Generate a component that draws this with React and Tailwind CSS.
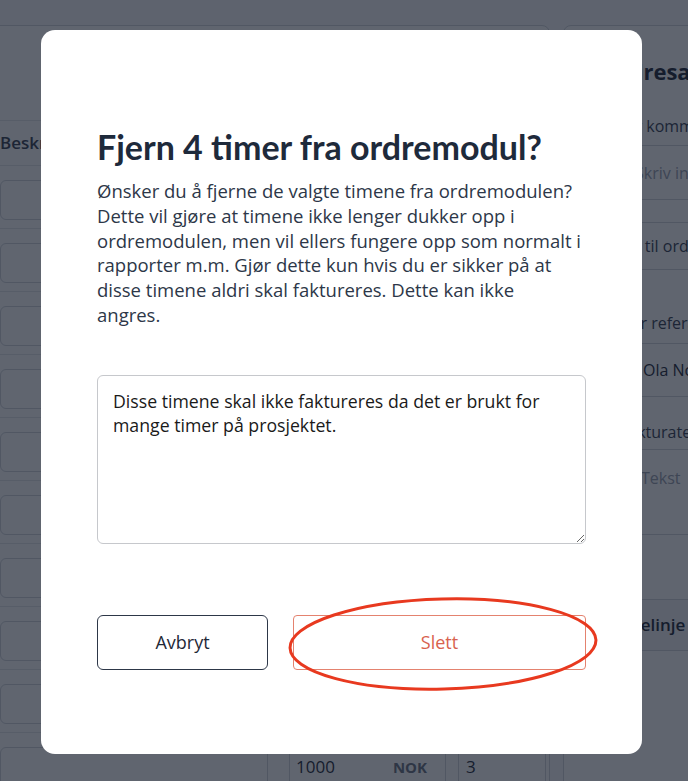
import React from "react";

function Row() {
  return (
    <div className="flex h-[63px] items-start border-b border-gray-200 pt-[14px]">
      <div className="h-[40px] w-[268px] shrink-0 rounded-md border border-gray-300 bg-white" />
      <div className="ml-[21px] flex h-[40px] w-[157px] shrink-0 items-center justify-between rounded-md border border-gray-300 bg-white pl-[6px] pr-[18px]">
        <span className="text-[17px] text-gray-800">1000</span>
        <span className="text-[15px] font-bold text-gray-500">NOK</span>
      </div>
      <div className="ml-[12px] flex h-[40px] w-[88px] shrink-0 items-center rounded-md border border-gray-300 bg-white pl-[7px]">
        <span className="text-[17px] text-gray-800">3</span>
      </div>
    </div>
  );
}

const lines = [
  "Ønsker du å fjerne de valgte timene fra ordremodulen?",
  "Dette vil gjøre at timene ikke lenger dukker opp i",
  "ordremodulen, men vil ellers fungere opp som normalt i",
  "rapporter m.m. Gjør dette kun hvis du er sikker på at",
  "disse timene aldri skal faktureres. Dette kan ikke",
  "angres.",
];

export default function App() {
  const rows = Array.from({ length: 10 });
  return (
    <div className="relative h-[781px] w-[688px] overflow-hidden bg-gray-50 font-['Open_Sans',sans-serif]">
      {/* background page */}
      <div className="flex">
        <div className="-ml-[17px] mt-[25px] h-[820px] w-[567px] shrink-0 rounded-lg border border-gray-300 bg-white pl-[16px]">
          <div className="mt-[94px] flex h-[46px] items-center border-y border-gray-200 text-[17px] font-semibold text-gray-700">
            Beskrivelse
          </div>
          {rows.map((_, i) => (
            <Row key={i} />
          ))}
        </div>
        <div className="ml-[13px] mt-[25px] h-[820px] w-[200px] shrink-0 rounded-lg border border-gray-300 bg-white pl-[58px]">
          <div className="-ml-[20px] mt-[29px] whitespace-nowrap text-[22px] font-bold text-gray-800">Ordresammendrag</div>
          <div className="mt-[26px] whitespace-nowrap text-[16px] text-gray-700">Ny kommentar</div>
          <div className="mt-[7px] flex h-[55px] items-center whitespace-nowrap border-y border-gray-300 pl-[13px] text-[16px] text-gray-400">
            Skriv inn kommentar
          </div>
          <div className="-ml-[16px] mt-[22px] flex h-[48px] items-center whitespace-nowrap border-y border-gray-300 text-[16px] text-gray-700">
            Legg til ordre
          </div>
          <div className="mt-[41px] whitespace-nowrap text-[16px] text-gray-700">Vår referanse</div>
          <div className="mt-[8px] flex h-[54px] items-center whitespace-nowrap border-y border-gray-300 pl-[21px] text-[16px] text-gray-800">
            Ola Nordmann
          </div>
          <div className="-ml-[2px] mt-[23px] whitespace-nowrap text-[16px] text-gray-700">Fakturatekst</div>
          <div className="mt-[5px] h-[86px] whitespace-nowrap border-y border-gray-300 pl-[19px] pt-[16px] text-[16px] text-gray-400">
            Tekst
          </div>
          <div className="-ml-[20px] mt-[64px] flex h-[52px] items-center whitespace-nowrap border-y border-gray-300 bg-gray-100 text-[17px] font-semibold text-gray-800">
            Ordrelinje
          </div>
        </div>
      </div>

      {/* overlay */}
      <div className="absolute inset-0 bg-[rgba(17,24,39,0.665)]" />

      {/* modal */}
      <div className="absolute left-[41px] top-[30px] flex h-[724px] w-[601px] flex-col rounded-[14px] bg-white px-[56px] pt-[97px]">
        <h2 className="whitespace-nowrap font-['Lato',sans-serif] text-[34px] font-bold leading-[40px] text-[#1e2a3b]">
          Fjern 4 timer fra ordremodul?
        </h2>
        <p className="mt-[12px] text-[18.5px] leading-[24.8px] text-[#2d3748]">
          {lines.map((l, i) => (
            <span key={i} className="block whitespace-nowrap">
              {l}
            </span>
          ))}
        </p>
        <textarea
          readOnly
          value="Disse timene skal ikke faktureres da det er brukt for mange timer på prosjektet."
          className="mt-[47px] h-[169px] w-full resize-y rounded-[6px] border-[1.5px] border-[#c6c8cc] px-[15px] pt-[13px] font-['Open_Sans',sans-serif] text-[17.7px] leading-[24px] text-[#1a1a1a] outline-none"
        />
        <div className="mt-[71px] flex gap-[25px]">
          <button className="flex h-[55px] w-[171px] items-center justify-center rounded-[6px] border-[1.5px] border-[#2d3748] text-[18px] text-[#1f2937]">
            Avbryt
          </button>
          <button className="flex h-[55px] flex-1 items-center justify-center rounded-[4px] border border-[#e4826f] text-[18px] text-[#d8624e]">
            Slett
          </button>
        </div>
      </div>

      {/* red annotation ellipse */}
      <svg className="pointer-events-none absolute left-[285px] top-[594px]" width="316" height="102" viewBox="0 0 316 102">
        <ellipse cx="158" cy="50" rx="153" ry="45" fill="none" stroke="#e8391f" strokeWidth="3" transform="rotate(-1.5 158 50)" />
      </svg>
    </div>
  );
}
